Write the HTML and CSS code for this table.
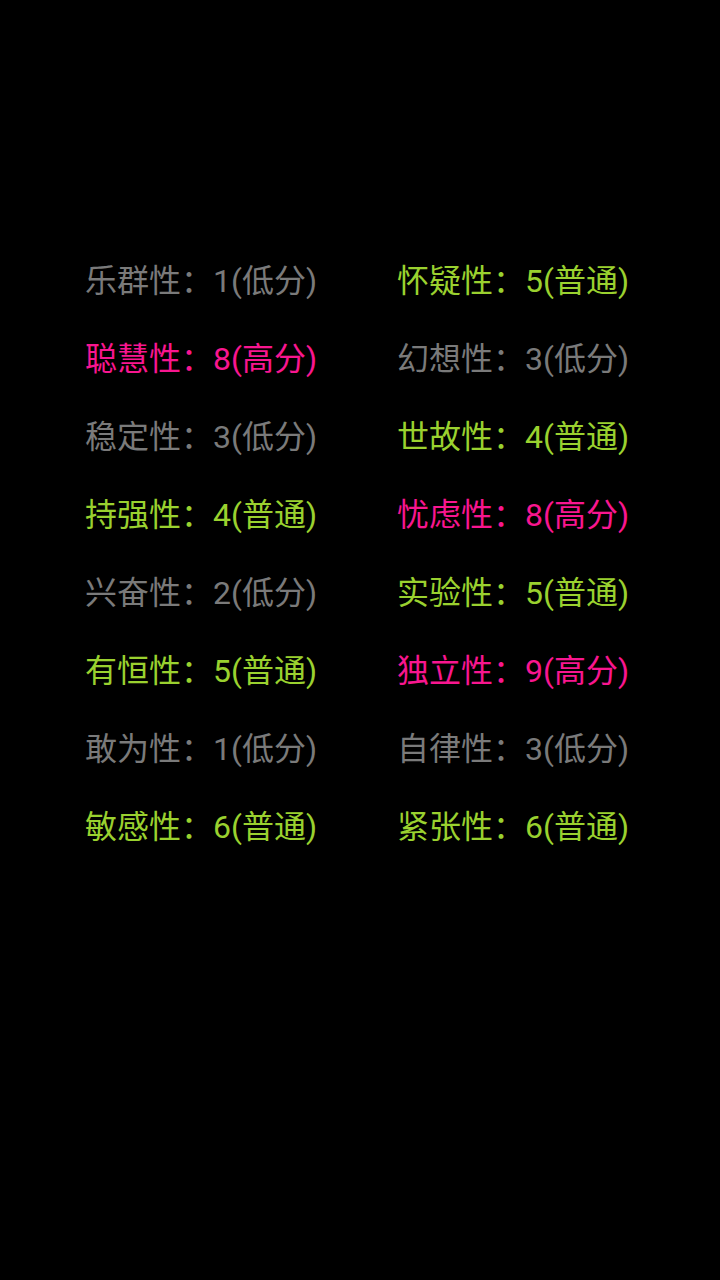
FILE: index.html
```html
<!DOCTYPE html>
<html lang="zh-CN">
<head>
<meta charset="utf-8">
<link rel="stylesheet" href="styles.css">
</head>
<body>
<div class="grid">
  <div class="item low">乐群性：1(低分)</div>
  <div class="item mid">怀疑性：5(普通)</div>
  <div class="item high">聪慧性：8(高分)</div>
  <div class="item low">幻想性：3(低分)</div>
  <div class="item low">稳定性：3(低分)</div>
  <div class="item mid">世故性：4(普通)</div>
  <div class="item mid">持强性：4(普通)</div>
  <div class="item high">忧虑性：8(高分)</div>
  <div class="item low">兴奋性：2(低分)</div>
  <div class="item mid">实验性：5(普通)</div>
  <div class="item mid">有恒性：5(普通)</div>
  <div class="item high">独立性：9(高分)</div>
  <div class="item low">敢为性：1(低分)</div>
  <div class="item low">自律性：3(低分)</div>
  <div class="item mid">敏感性：6(普通)</div>
  <div class="item mid">紧张性：6(普通)</div>
</div>
</body>
</html>
```

FILE: styles.css
```css
html, body {
  margin: 0;
  padding: 0;
  background: #000;
  width: 720px;
  height: 1280px;
  overflow: hidden;
}
.grid {
  display: grid;
  grid-template-columns: 312px 312px;
  grid-auto-rows: 78px;
  padding: 242px 0 0 86px;
}
.item {
  font-family: Roboto, "Noto Sans CJK SC", sans-serif;
  font-size: 32px;
  line-height: 78px;
  white-space: nowrap;
  margin-left: -1px;
}
.low { color: #7a7a7a; }
.mid { color: #9ad12f; }
.high { color: #f8168f; }
```
